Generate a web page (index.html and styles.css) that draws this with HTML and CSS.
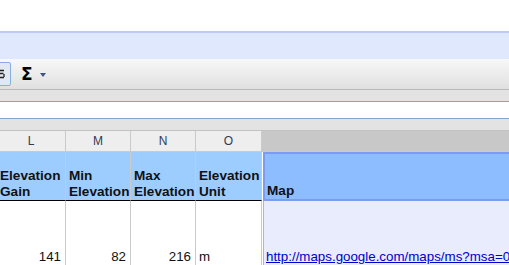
FILE: index.html
```html
<!DOCTYPE html>
<html lang="en">
<head>
  <meta charset="UTF-8">
  <title>Spreadsheet</title>
  <link rel="stylesheet" href="styles.css">
</head>
<body>

  <div class="top"></div>
  <div class="menubar"></div>

  <div class="toolbar">
    <span class="tbtn">
      <svg width="8" height="10" viewBox="0 0 8 10"><path d="M0 1.5h6M0 4.5h5.5M6 5v3M0 8.5h6" stroke="#222" stroke-width="1.3" fill="none"/></svg>
    </span>
    <span class="sigma">&Sigma;</span>
    <span class="caret"></span>
  </div>

  <div class="strip"></div>
  <div class="formula"></div>
  <div class="strip strip-low"></div>

  <div class="sheet">
    <!-- litery kolumn -->
    <div class="colhead">L</div>
    <div class="colhead">M</div>
    <div class="colhead">N</div>
    <div class="colhead">O</div>
    <div class="colhead colhead-sel"></div>

    <!-- naglowki -->
    <div class="hcell">Elevation<br>Gain</div>
    <div class="hcell">Min<br>Elevation</div>
    <div class="hcell">Max<br>Elevation</div>
    <div class="hcell">Elevation<br>Unit</div>
    <div class="hcell hcell-sel">Map</div>

    <!-- dane -->
    <div class="cell num">141</div>
    <div class="cell num">82</div>
    <div class="cell num">216</div>
    <div class="cell">m</div>
    <div class="cell cell-sel"><a href="#">http://maps.google.com/maps/ms?msa=0</a></div>
  </div>

</body>
</html>
```

FILE: styles.css
```css
body {
  margin: 0;
  font-family: "Liberation Sans", Arial, sans-serif;
  background: #fff;
  overflow: hidden;
}
.top {
  height: 31px;
}
.menubar {
  height: 26px;
  border-top: 2px solid #bccbf9;
  background: #e0e8fe;
}
.toolbar {
  height: 30px;
  background: linear-gradient(#f8f8f8, #e0e0e0);
  border-bottom: 1px solid #b9b9b9;
  display: flex;
  align-items: center;
}
.tbtn {
  box-sizing: border-box;
  width: 14px;
  height: 24px;
  margin-left: -3px;
  border: 1px solid #89aee0;
  border-radius: 2px;
  background: #e2e8f2;
  display: flex;
  align-items: center;
}
.sigma {
  margin-left: 10px;
  font-family: "DejaVu Sans", sans-serif;
  font-weight: bold;
  font-size: 17px;
  line-height: 17px;
  color: #000;
}
.caret {
  margin-left: 7px;
  margin-top: 2px;
  border-left: 3.5px solid transparent;
  border-right: 3.5px solid transparent;
  border-top: 4px solid #3a5584;
}
.strip {
  height: 11px;
  background: #e3e3e3;
  border-bottom: 1px solid #86a2c4;
}
.formula {
  height: 16px;
  background: #fff;
  border-bottom: 1px solid #86a2c4;
}
.strip-low {
  border-bottom-color: #c2c2c2;
}
.sheet {
  display: grid;
  grid-template-columns: 69px 65px 65px 66px 260px;
  grid-template-rows: 21px 49px 64px;
  margin-left: -3px;
  font-size: 13.33px;
}
.colhead {
  box-sizing: border-box;
  background: #eeeeee;
  border-right: 1px solid #cacaca;
  border-bottom: 1px solid #cacaca;
  text-align: center;
  font-size: 12px;
  line-height: 20px;
  color: #333a55;
}
.colhead-sel {
  background: #c8c8c8;
  border-right: none;
}
.hcell {
  box-sizing: border-box;
  background: #9dcdff;
  border-right: 1px solid #cacaca;
  border-bottom: 1px solid #000;
  font-weight: bold;
  font-size: 13.6px;
  line-height: 16px;
  padding: 0 0 0 3px;
  display: flex;
  align-items: flex-end;
  color: #111;
  white-space: nowrap;
}
.hcell-sel {
  background: #8ebdff;
  border: 2px solid #7b9cf2;
  border-right: none;
  margin-left: 1px;
  padding-left: 2px;
}
.cell {
  box-sizing: border-box;
  border-right: 1px solid #cacaca;
  line-height: 16px;
  padding: 0 4px 0 3px;
  display: flex;
  align-items: flex-end;
  white-space: nowrap;
  color: #111;
}
.num {
  justify-content: flex-end;
}
.cell-sel {
  background: #e8ecfc;
  border-left: 1px solid #a8b3e6;
  border-right: none;
  margin-left: 1px;
  padding-left: 2px;
}
.cell a {
  color: #0000cc;
}
```
